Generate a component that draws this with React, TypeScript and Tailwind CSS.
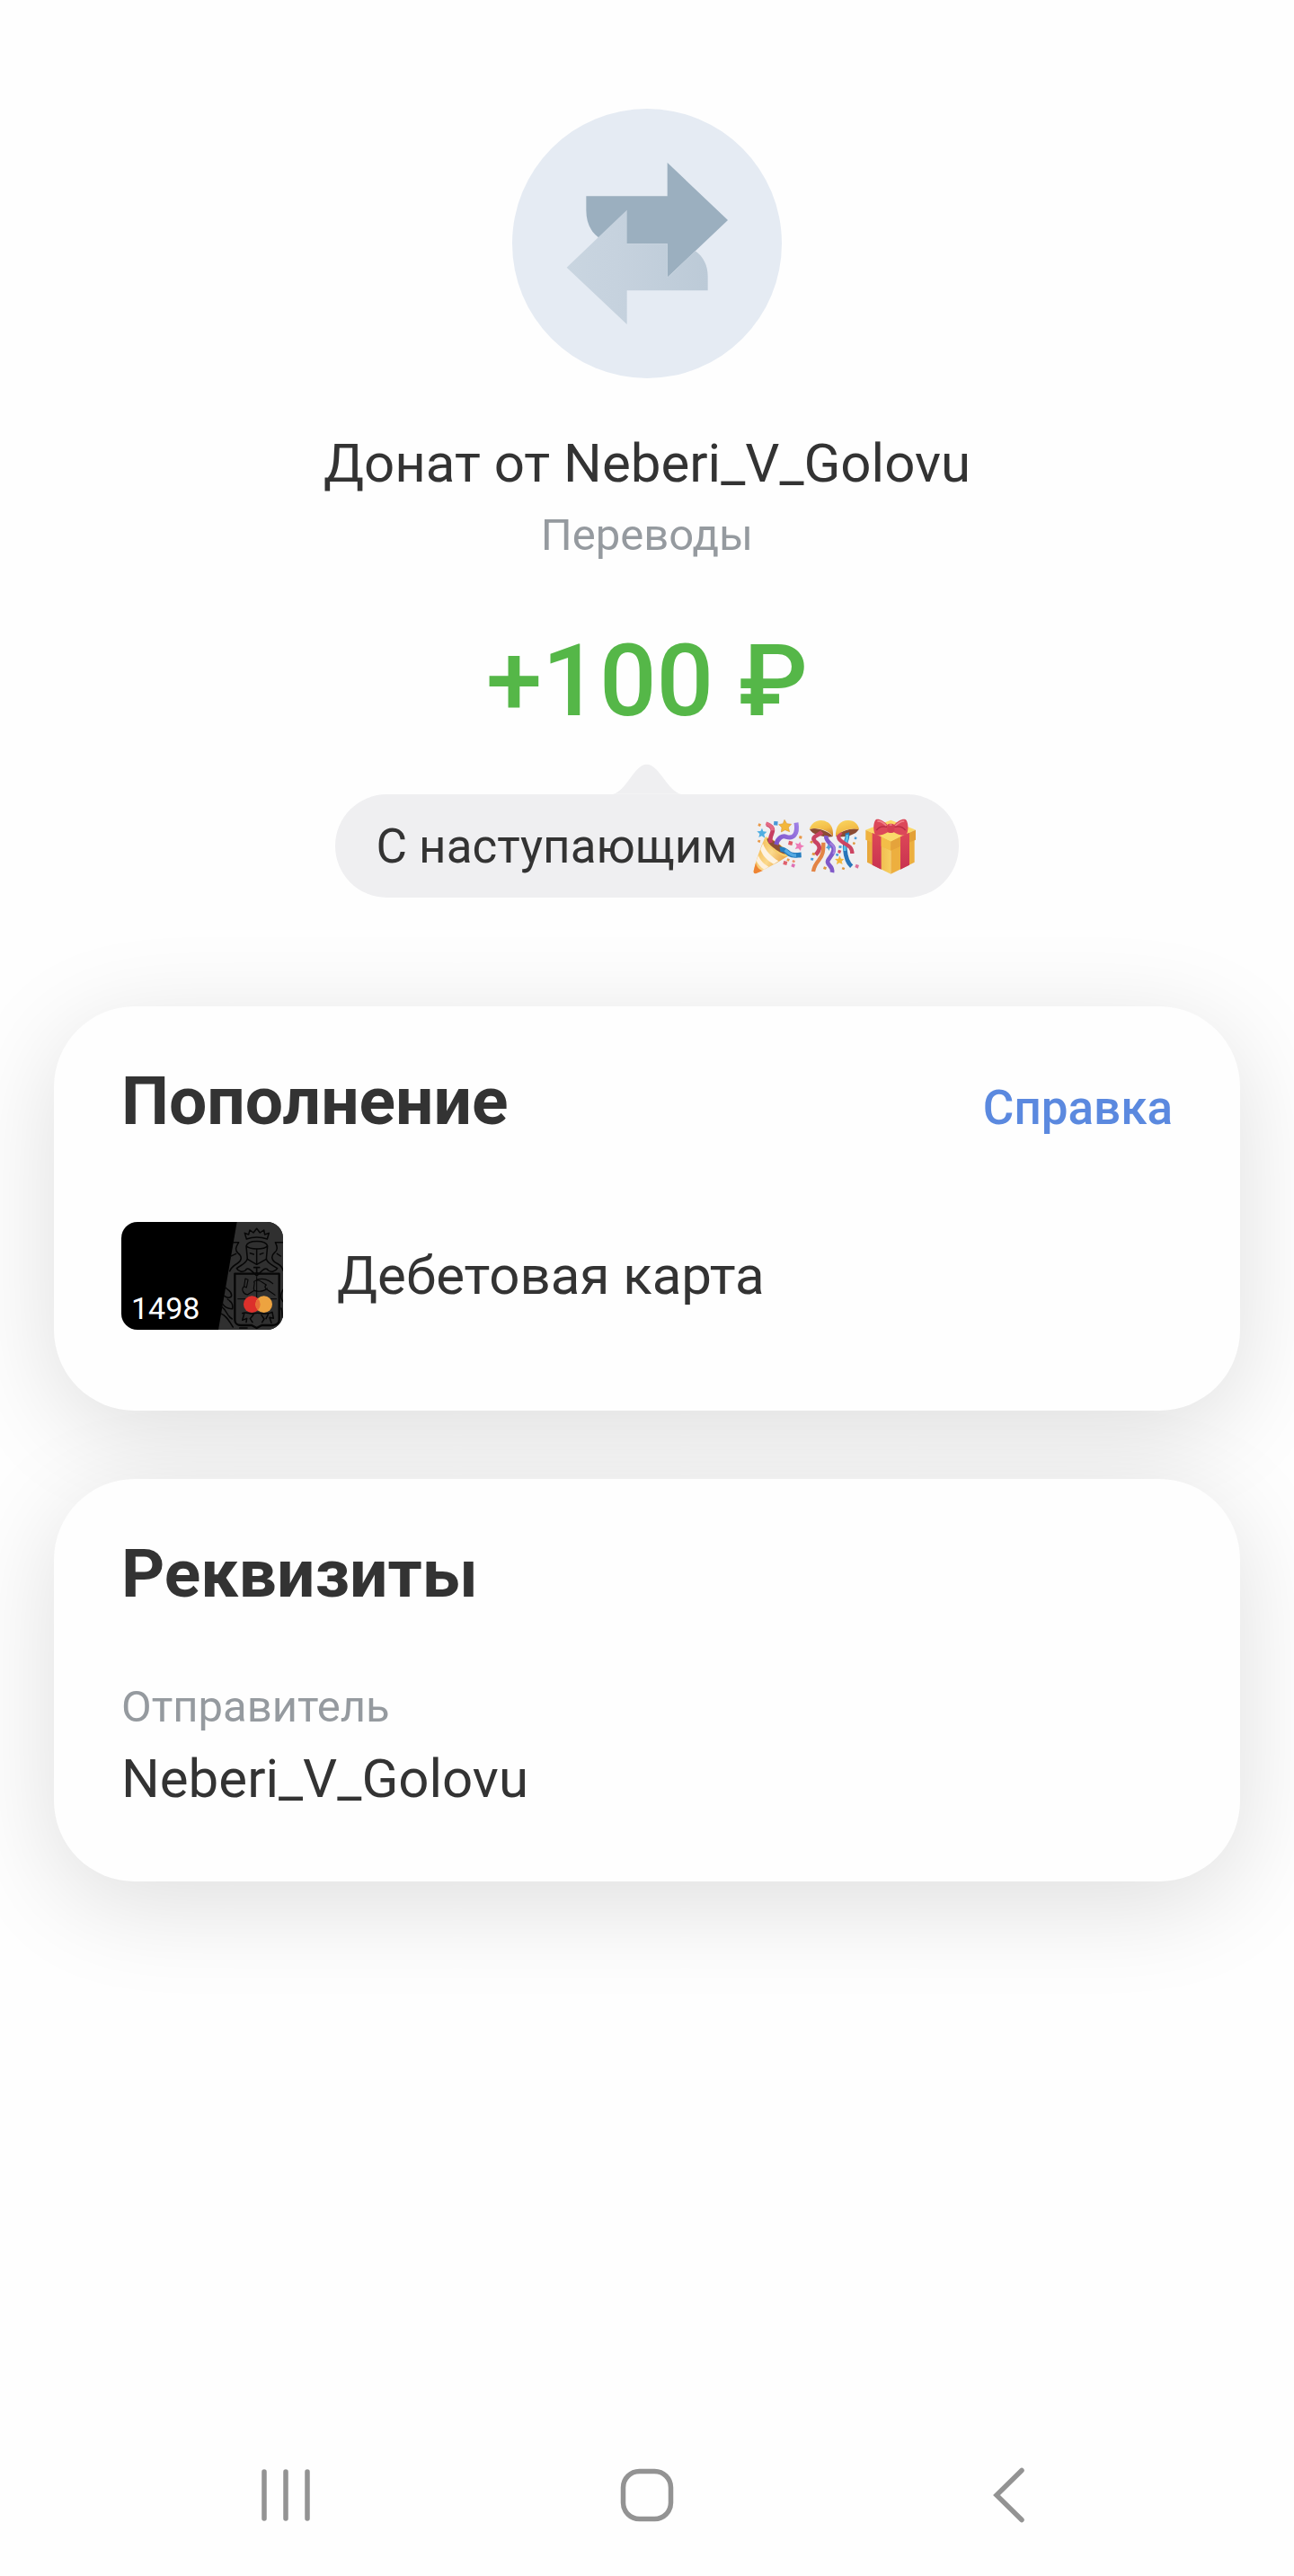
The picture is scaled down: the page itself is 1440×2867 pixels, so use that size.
import React from "react";

function TransferIcon() {
  return (
    <svg viewBox="60 62 900 900" className="size-[300px]" aria-hidden="true">
      <defs>
        <linearGradient id="backArrow" x1="0" x2="1" y1="0" y2="0">
          <stop offset="0" stopColor="#c9d5e0" />
          <stop offset="0.35" stopColor="#c6d2de" />
          <stop offset="1" stopColor="#bccad7" />
        </linearGradient>
      </defs>
      <circle cx="510" cy="512" r="450" fill="#e5ebf3" />
      <path d="M307 354H578V242L780 434L578 625V513H420C350 513 307 470 307 400Z" fill="#9bafbf" />
      <path
        d="M443 400V513H578V625L671 537C698 556 713 585 713 622V669H443V782L242 592Z"
        fill="url(#backArrow)"
      />
    </svg>
  );
}

function BubbleTail() {
  return (
    <svg viewBox="0 0 228 100" className="h-[34px] w-[76px]" aria-hidden="true">
      <path d="M0 100C44 92 72 1 113 1C154 1 184 92 228 100Z" fill="#efeff1" />
    </svg>
  );
}

function PartyPopper() {
  return (
    <svg viewBox="45 60 186 189" className="h-[63px] w-[62px]" role="img" aria-label="🎉">
      <defs>
        <linearGradient id="cone" x1="0" x2="1" y1="0.2" y2="0.7">
          <stop offset="0" stopColor="#f2b44a" />
          <stop offset="0.5" stopColor="#fbd98c" />
          <stop offset="1" stopColor="#e79a3a" />
        </linearGradient>
        <linearGradient id="violet" x1="0" x2="1" y1="1" y2="0">
          <stop offset="0" stopColor="#7d52c9" />
          <stop offset="1" stopColor="#9f80e6" />
        </linearGradient>
      </defs>
      <path d="M91 126C76 160 60 205 53 238C52 245 57 248 63 245C95 231 140 206 168 188C146 190 94 156 91 126Z" fill="url(#cone)" />
      <path d="M84 146C92 170 112 190 136 205L120 215C98 204 82 186 76 166Z" fill="#fdf3e3" />
      <path d="M69 186C75 203 88 216 103 224L88 233C75 225 66 214 62 204Z" fill="#fdf0dd" />
      <path d="M60 211C63 225 73 236 84 237L62 246C56 248 52 245 53 238Z" fill="#ee8433" />
      <path d="M91 126C96 120 124 135 145 153C163 168 172 183 168 188C159 195 133 181 113 164C97 150 88 134 91 126Z" fill="#f7cf6b" />
      <path d="M98 130C106 128 126 140 141 152C155 164 162 176 160 181C151 183 133 172 118 160C104 149 96 137 98 130Z" fill="#8c4f31" />
      <path d="M97 82C114 88 121 99 114 113C109 124 107 133 110 144" fill="none" stroke="#c63d62" strokeWidth="14" />
      <path d="M94 79C108 84 117 93 117 103" fill="none" stroke="#e36a84" strokeWidth="12" />
      <path d="M128 150C134 127 149 119 162 124C184 131 202 118 195 77" fill="none" stroke="url(#violet)" strokeWidth="15" />
      <path d="M141 166C156 163 162 174 174 182C185 189 196 185 212 184" fill="none" stroke="#267ec0" strokeWidth="17" />
      <path d="M158 168C169 177 178 187 195 186" fill="none" stroke="#53a9e3" strokeWidth="10" />
      <path d="M156 67L164 80L179 82L169 93L173 107L158 101L145 108L147 93L137 83L151 80Z" fill="#f3b73b" stroke="#d58c2a" strokeWidth="1.5" />
      <path d="M81 95L85 106L97 107L88 116L91 128L80 121L70 126L73 114L64 106L76 105Z" fill="#4faee2" />
      <path d="M208 140L211 151L222 155L212 160L210 171L202 163L191 165L197 155L192 145L203 148Z" fill="#ee7ab6" />
      <path d="M121 72L134 73L133 86L120 85Z" fill="#4898d6" />
      <path d="M171 137L184 140L181 153L168 150Z" fill="#e05a68" />
      <path d="M70 79L78 82L75 90L67 87Z M68 134L76 136L74 144L66 141Z M206 120L215 122L213 131L204 129Z M166 196L174 199L170 206L163 203Z" fill="#e99847" />
      <path d="M154 204L166 207L163 219L151 216Z" fill="#e0606c" />
      <path d="M182 213L192 217L188 227L178 223Z" fill="#df70b5" />
      <path d="M184 201L192 204L189 211L181 208Z" fill="#ef8e69" />
    </svg>
  );
}

function ConfettiBall() {
  return (
    <svg viewBox="231 60 186 189" className="h-[63px] w-[62px]" role="img" aria-label="🎊">
      <defs>
        <linearGradient id="dome" x1="0.3" x2="0.7" y1="0" y2="1">
          <stop offset="0" stopColor="#f9d45f" />
          <stop offset="0.55" stopColor="#f3bd48" />
          <stop offset="1" stopColor="#cf8530" />
        </linearGradient>
      </defs>
      <path d="M240 99C259 90 303 105 318 123C303 127 251 122 240 99Z" fill="#8b4b32" />
      <path d="M327 123C342 104 386 91 404 99C393 122 345 127 327 123Z" fill="#8b4b32" />
      <path d="M281 108C268 121 243 123 258 140C273 151 280 163 260 184" fill="none" stroke="#c94362" strokeWidth="14" />
      <path d="M286 143C286 172 285 184 270 203C259 216 254 228 252 240" fill="none" stroke="#e38445" strokeWidth="13" />
      <path d="M295 120C293 139 310 146 318 157C327 173 309 190 301 203C294 218 319 219 315 243" fill="none" stroke="#8159c9" strokeWidth="14" />
      <path d="M308 145C323 155 327 168 319 182" fill="none" stroke="#a281df" strokeWidth="7" />
      <path d="M365 111C371 130 354 143 358 165C360 190 367 211 380 223" fill="none" stroke="#2875ba" strokeWidth="14" />
      <path d="M365 117C368 136 355 146 357 171" fill="none" stroke="#5cc4e7" strokeWidth="9" />
      <path d="M346 109C326 124 340 135 355 145C372 154 382 161 382 180" fill="none" stroke="#cc4563" strokeWidth="13" />
      <path d="M239 99C248 69 279 61 301 76C317 87 319 105 318 123C304 102 265 90 239 99Z" fill="url(#dome)" />
      <path d="M327 123C325 88 343 68 369 69C390 69 404 84 405 100C378 92 346 103 327 123Z" fill="url(#dome)" />
      <path d="M340 187L345 197L355 198L347 206L350 216L339 211L330 217L332 205L324 198L336 197Z" fill="#f3b73c" />
      <path d="M302 147L306 155L314 158L307 163L305 171L300 163L294 161L299 156Z" fill="#509fd6" />
      <path d="M336 167L346 170L342 180L333 176Z" fill="#d64f68" />
      <path d="M338 153L347 154L346 162L337 161Z M328 180L337 181L335 189L327 187Z M244 194L253 195L252 203L243 202Z M390 124L398 126L396 133L389 132Z" fill="#4d9dda" />
      <path d="M250 176L259 179L256 187L247 184Z M288 223L297 226L294 234L285 231Z M243 137L251 139L249 146L241 144Z M386 141L393 144L390 151L383 148Z M350 225L358 228L355 235L347 232Z" fill="#df9740" />
      <path d="M395 215L405 219L401 230L391 225Z" fill="#dd719a" />
    </svg>
  );
}

function Gift() {
  return (
    <svg viewBox="417 60 186 189" className="h-[63px] w-[62px]" role="img" aria-label="🎁">
      <defs>
        <linearGradient id="boxLeft" x1="0" x2="1" y1="0" y2="0">
          <stop offset="0" stopColor="#e7a53a" />
          <stop offset="1" stopColor="#f7cf61" />
        </linearGradient>
        <linearGradient id="ribbon" x1="0" x2="0" y1="0" y2="1">
          <stop offset="0" stopColor="#dd4757" />
          <stop offset="1" stopColor="#c93350" />
        </linearGradient>
      </defs>
      <path d="M432 130L511 155V248L432 209Z" fill="url(#boxLeft)" />
      <path d="M511 155L590 130V209L511 248Z" fill="#edaf3f" />
      <path d="M427 101L511 68L594 101L511 139Z" fill="#fbd866" />
      <path d="M427 101L511 139V169L427 134Z" fill="#efb23f" />
      <path d="M511 139L594 101V134L511 169Z" fill="#e3a037" />
      <path d="M449 111L479 124V233L449 218Z" fill="url(#ribbon)" />
      <path d="M543 124L573 110V218L543 233Z" fill="url(#ribbon)" />
      <path d="M511 107L543 124L511 140L479 124Z" fill="#fada6b" />
      <path d="M479 124L511 140V170L479 155Z" fill="#f3bd48" />
      <path d="M511 140L543 124V155L511 170Z" fill="#e5a33b" />
      <path d="M500 84C486 69 464 59 459 69C451 84 453 105 459 119C477 121 489 115 502 108Z" fill="#dc4859" />
      <path d="M522 84C535 69 557 59 563 69C571 84 569 105 563 119C545 121 533 115 520 108Z" fill="#dc4859" />
      <path d="M499 91C483 87 470 92 463 102M523 91C539 87 552 92 560 102" fill="none" stroke="#b72a43" strokeWidth="4" />
      <path d="M466 72C475 71 487 78 496 87M556 72C547 71 536 78 526 87" fill="none" stroke="#f1818b" strokeWidth="5" />
      <rect x="499" y="80" width="24" height="31" rx="9" fill="#d43f53" />
      <path d="M506 84H515" stroke="#ef8a92" strokeWidth="4" />
    </svg>
  );
}

function BankCard() {
  return (
    <div className="relative h-[120px] w-[180px] shrink-0 overflow-hidden rounded-[18px] bg-black">
      <svg viewBox="45 60 540 360" className="block size-full" aria-hidden="true">
        <path d="M431 60H585V420H369Z" fill="#303030" />
        <g fill="none" stroke="#060606" strokeWidth="4.5" strokeLinejoin="round" strokeLinecap="round">
          <path d="M463 117L457 97L470 102L474 87L486 96L497 82L508 96L521 87L524 102L538 97L532 117C511 110 484 110 463 117Z" />
          <path d="M462 140C467 119 528 119 533 140C522 153 474 153 462 140ZM462 140L466 184L497 202L529 184L533 140M497 151V202M475 164L487 168M519 164L508 168" />
          <path d="M466 184C459 201 445 203 430 215C436 226 450 229 459 222C468 207 480 224 497 240C514 224 526 207 536 222C545 229 559 226 566 215C550 203 535 201 529 184" />
          <path d="M488 212H506M497 212V231M492 231H502" strokeWidth="5" />
          <path d="M418 128H437C428 143 423 153 434 163C450 176 447 189 433 198C420 206 411 212 407 224M585 128H559C567 144 568 153 556 163C543 174 547 190 564 198C576 204 583 213 585 222" />
          <path d="M409 175L428 166M577 174L565 166" />
          <path d="M424 233H572V388C572 398 562 405 550 405H514L497 414L480 405H444C433 405 424 398 424 388Z" strokeWidth="7" />
          <path d="M434 317H563M497 244V315" strokeWidth="3" />
          <path d="M459 249L455 275L463 279L468 253ZM455 275C444 283 451 301 466 303L489 289C482 277 494 269 488 259C504 246 515 264 529 270C515 281 538 288 558 304M489 289C503 293 520 293 532 282M497 252C519 248 534 250 551 266" strokeWidth="3.5" />
          <path d="M391 278C403 288 414 293 413 306C410 316 397 313 389 307M400 318C411 326 419 333 416 350C402 350 389 344 382 332M381 344C399 357 397 375 415 384M377 366C395 371 405 391 418 411M585 286C573 305 578 318 585 326M579 348C585 364 579 375 585 386" />
          <path d="M449 365C463 357 476 371 489 365C507 359 526 374 549 361L553 382L540 379L546 397M455 367L449 388L464 382L462 395M486 370L475 383L483 395M513 371L522 384L515 395M535 369L528 383" />
          <path d="M440 414H465" />
        </g>
        <circle cx="481" cy="335" r="28" fill="#dc302b" />
        <circle cx="521" cy="335" r="28" fill="#eda340" />
        <path d="M501 315.4A28 28 0 0 1 501 354.6A28 28 0 0 1 501 315.4Z" fill="#e66d36" />
      </svg>
      <span className="absolute bottom-1 left-[11px] text-[34px] leading-10 text-white">1498</span>
    </div>
  );
}

function Panel({ title, action, children }: { title: string; action?: React.ReactNode; children: React.ReactNode }) {
  return (
    <section className="rounded-[90px] bg-[#fefefe] px-[75px] pt-[60px] shadow-[0_24px_112px_rgba(0,0,0,0.13)]">
      <div className="flex items-baseline justify-between">
        <h2 className="text-[75px] leading-[90px] font-bold">{title}</h2>
        {action}
      </div>
      {children}
    </section>
  );
}

const navButton = "flex h-[90px] items-center justify-center";

export default function App() {
  return (
    <div className="flex min-h-screen flex-col bg-[#fefefe] font-['Roboto',sans-serif] text-[#333333]">
      <header className="flex flex-col items-center pt-[121px]">
        <TransferIcon />
        <h1 className="mt-[59px] text-[60px] leading-[72px]">Донат от Neberi_V_Golovu</h1>
        <p className="mt-[14px] text-[49px] leading-[60px] text-[#959a9f]">Переводы</p>
        <p className="mt-[66px] text-[112px] leading-[132px] font-medium text-[#55b748]">+100 ₽</p>
        <div className="mt-[26px] flex flex-col items-center">
          <BubbleTail />
          <div className="flex h-[115px] items-center rounded-full bg-[#efeff1] px-[45px]">
            <span className="mr-[15px] text-[53px] leading-[60px]">С наступающим</span>
            <PartyPopper />
            <ConfettiBall />
            <Gift />
          </div>
        </div>
      </header>

      <main className="mt-[121px] flex grow flex-col gap-[76px] px-[60px]">
        <Panel
          title="Пополнение"
          action={
            <a href="#help" className="text-[53px] leading-[60px] font-medium text-[#5b89df]">
              Справка
            </a>
          }
        >
          <div className="mt-[90px] flex items-center gap-[60px] pb-[90px]">
            <BankCard />
            <span className="text-[60px] leading-[72px]">Дебетовая карта</span>
          </div>
        </Panel>
        <Panel title="Реквизиты">
          <dl className="mt-[74px] pb-[78px]">
            <dt className="text-[49px] leading-[60px] text-[#959a9f]">Отправитель</dt>
            <dd className="mt-[14px] text-[60px] leading-[72px]">Neberi_V_Golovu</dd>
          </dl>
        </Panel>
      </main>

      <nav className="grid h-[180px] grid-cols-3 items-center px-[117px] text-[#939393]" aria-label="Система">
        <button type="button" aria-label="Недавние" className={navButton}>
          <svg viewBox="0 0 60 60" className="size-[60px]" fill="none" stroke="currentColor" strokeWidth="5.5" strokeLinecap="round">
            <path d="M6 4V56M30 4V56M54 4V56" />
          </svg>
        </button>
        <button type="button" aria-label="Домой" className={navButton}>
          <svg viewBox="0 0 60 60" className="size-[60px]" fill="none" stroke="currentColor" strokeWidth="5.5">
            <rect x="3.5" y="3.5" width="53" height="53" rx="18" />
          </svg>
        </button>
        <button type="button" aria-label="Назад" className={navButton}>
          <svg viewBox="0 0 60 62" className="h-[62px] w-[60px]" fill="none" stroke="currentColor" strokeWidth="5.5" strokeLinecap="round">
            <path d="M45 3.5L17 31L45 58.5" />
          </svg>
        </button>
      </nav>
    </div>
  );
}
